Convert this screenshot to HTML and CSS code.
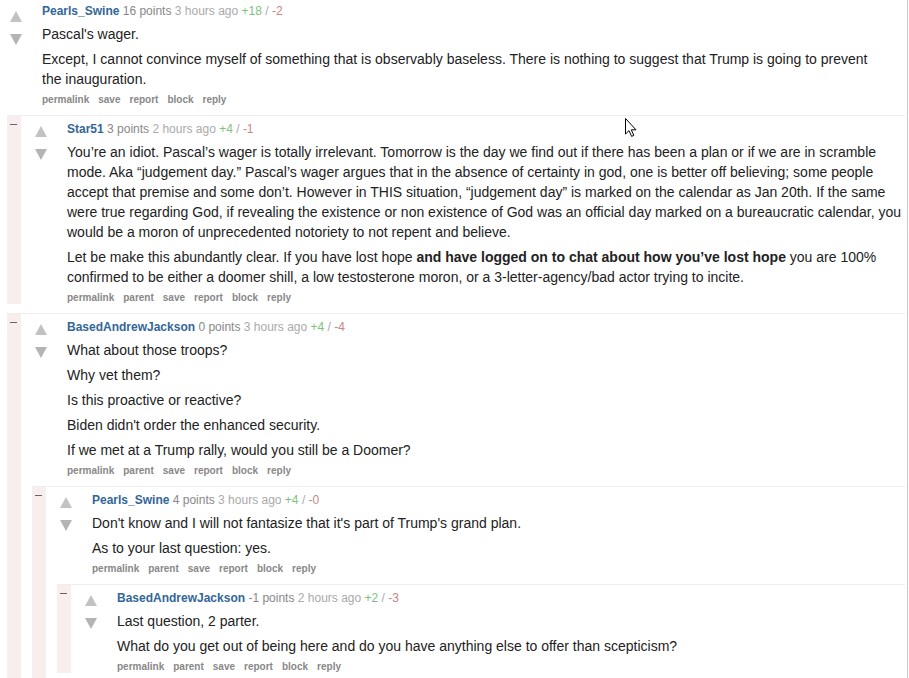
FILE: index.html
```html
<!DOCTYPE html>
<html>
<head>
<meta charset="utf-8">
<link rel="stylesheet" href="styles.css">
</head>
<body>
<div class="page">
  <div class="comment top">
    <div class="main">
      <div class="row">
        <div class="midcol">
          <svg class="arrow up" viewBox="0 0 12 11"><polygon points="6,0 12,11 0,11"/></svg>
          <svg class="arrow down" viewBox="0 0 12 11"><polygon points="0,0 12,0 6,11"/></svg>
        </div>
        <div class="entry">
          <p class="tagline"><a class="author">Pearls_Swine</a> <span class="score">16 points</span> <span class="time">3 hours ago</span> <span class="ups">+18</span> <span class="sep">/</span> <span class="downs">-2</span></p>
          <div class="md">
            <p>Pascal's wager.</p>
            <p>Except, I cannot convince myself of something that is observably baseless. There is nothing to suggest that Trump is going to prevent the inauguration.</p>
          </div>
          <ul class="buttons"><li>permalink</li><li>save</li><li>report</li><li>block</li><li>reply</li></ul>
        </div>
      </div>
      <div class="children">

        <div class="comment child">
          <div class="stripe"><span class="toggle"></span></div>
          <div class="main">
            <div class="row">
              <div class="midcol">
                <svg class="arrow up" viewBox="0 0 12 11"><polygon points="6,0 12,11 0,11"/></svg>
                <svg class="arrow down" viewBox="0 0 12 11"><polygon points="0,0 12,0 6,11"/></svg>
              </div>
              <div class="entry">
                <p class="tagline"><a class="author">Star51</a> <span class="score">3 points</span> <span class="time">2 hours ago</span> <span class="ups">+4</span> <span class="sep">/</span> <span class="downs">-1</span></p>
                <div class="md">
                  <p>You’re an idiot. Pascal’s wager is totally irrelevant. Tomorrow is the day we find out if there has been a plan or if we are in scramble mode. Aka “judgement day.” Pascal’s wager argues that in the absence of certainty in god, one is better off believing; some people accept that premise and some don’t. However in THIS situation, “judgement day” is marked on the calendar as Jan 20th. If the same were true regarding God, if revealing the existence or non existence of God was an official day marked on a bureaucratic calendar, you would be a moron of unprecedented notoriety to not repent and believe.</p>
                  <p>Let be make this abundantly clear. If you have lost hope <strong>and have logged on to chat about how you’ve lost hope</strong> you are 100% confirmed to be either a doomer shill, a low testosterone moron, or a 3-letter-agency/bad actor trying to incite.</p>
                </div>
                <ul class="buttons"><li>permalink</li><li>parent</li><li>save</li><li>report</li><li>block</li><li>reply</li></ul>
              </div>
            </div>
          </div>
        </div>

        <div class="comment child">
          <div class="stripe"><span class="toggle"></span></div>
          <div class="main">
            <div class="row">
              <div class="midcol">
                <svg class="arrow up" viewBox="0 0 12 11"><polygon points="6,0 12,11 0,11"/></svg>
                <svg class="arrow down" viewBox="0 0 12 11"><polygon points="0,0 12,0 6,11"/></svg>
              </div>
              <div class="entry">
                <p class="tagline"><a class="author">BasedAndrewJackson</a> <span class="score">0 points</span> <span class="time">3 hours ago</span> <span class="ups">+4</span> <span class="sep">/</span> <span class="downs">-4</span></p>
                <div class="md">
                  <p>What about those troops?</p>
                  <p>Why vet them?</p>
                  <p>Is this proactive or reactive?</p>
                  <p>Biden didn't order the enhanced security.</p>
                  <p>If we met at a Trump rally, would you still be a Doomer?</p>
                </div>
                <ul class="buttons"><li>permalink</li><li>parent</li><li>save</li><li>report</li><li>block</li><li>reply</li></ul>
              </div>
            </div>
            <div class="children">

              <div class="comment child">
                <div class="stripe"><span class="toggle"></span></div>
                <div class="main">
                  <div class="row">
                    <div class="midcol">
                      <svg class="arrow up" viewBox="0 0 12 11"><polygon points="6,0 12,11 0,11"/></svg>
                      <svg class="arrow down" viewBox="0 0 12 11"><polygon points="0,0 12,0 6,11"/></svg>
                    </div>
                    <div class="entry">
                      <p class="tagline"><a class="author">Pearls_Swine</a> <span class="score">4 points</span> <span class="time">3 hours ago</span> <span class="ups">+4</span> <span class="sep">/</span> <span class="downs">-0</span></p>
                      <div class="md">
                        <p>Don't know and I will not fantasize that it's part of Trump's grand plan.</p>
                        <p>As to your last question: yes.</p>
                      </div>
                      <ul class="buttons"><li>permalink</li><li>parent</li><li>save</li><li>report</li><li>block</li><li>reply</li></ul>
                    </div>
                  </div>
                  <div class="children">

                    <div class="comment child last">
                      <div class="stripe"><span class="toggle"></span></div>
                      <div class="main">
                        <div class="row">
                          <div class="midcol">
                            <svg class="arrow up" viewBox="0 0 12 11"><polygon points="6,0 12,11 0,11"/></svg>
                            <svg class="arrow down" viewBox="0 0 12 11"><polygon points="0,0 12,0 6,11"/></svg>
                          </div>
                          <div class="entry">
                            <p class="tagline"><a class="author">BasedAndrewJackson</a> <span class="score">-1 points</span> <span class="time">2 hours ago</span> <span class="ups">+2</span> <span class="sep">/</span> <span class="downs">-3</span></p>
                            <div class="md">
                              <p>Last question, 2 parter.</p>
                              <p>What do you get out of being here and do you have anything else to offer than scepticism?</p>
                            </div>
                            <ul class="buttons"><li>permalink</li><li>parent</li><li>save</li><li>report</li><li>block</li><li>reply</li></ul>
                          </div>
                        </div>
                      </div>
                    </div>

                  </div>
                </div>
              </div>

            </div>
          </div>
        </div>

      </div>
    </div>
  </div>

  <svg class="cursor" viewBox="0 0 12 19" width="12" height="19"><path d="M0.5,0.5 L0.5,16 L4,12.6 L6.6,18.4 L8.8,17.4 L6.3,11.8 L11,11.8 Z" fill="#fff" stroke="#000" stroke-width="1" stroke-linejoin="miter"/></svg>
</div>
</body>
</html>
```

FILE: styles.css
```css
html, body {
  margin: 0;
  padding: 0;
  background: #fff;
}

body {
  font-family: "Liberation Sans", Arial, sans-serif;
  color: #222;
}

.page {
  position: relative;
  width: 905px;
  height: 678px;
  padding-right: 2px;
  border-right: 1px solid #c9c9c9;
  overflow: hidden;
}

.comment {
  display: flex;
}

.comment.top {
  padding-top: 4px;
}

.comment.child {
  margin-top: 9px;
  border-top: 1px solid #eeeeee;
}

.comment.last {
  padding-bottom: 30px;
}

.stripe {
  flex: 0 0 14px;
  background: #f8eeee;
  padding-top: 8px;
  box-sizing: border-box;
}

.toggle {
  display: block;
  width: 7px;
  height: 1px;
  margin-left: 3px;
  background: #666;
}

.main {
  flex: 1;
  min-width: 0;
  display: flex;
  flex-direction: column;
}

.row {
  display: flex;
}

.midcol {
  flex: 0 0 12px;
  margin-left: 14px;
  margin-right: 20px;
  padding-top: 10px;
  display: flex;
  flex-direction: column;
}

.comment.top > .main > .row > .midcol {
  margin-left: 10px;
  padding-top: 7px;
}

.arrow {
  display: block;
  width: 12px;
  height: 11px;
}

.arrow.up {
  fill: #c2c2c2;
}

.arrow.down {
  fill: #b4b4b4;
  margin-top: 12px;
}

.entry {
  flex: 1;
  min-width: 0;
  padding-top: 6px;
}

.comment.top > .main > .row > .entry {
  padding-top: 0;
}

.tagline {
  margin: 0 0 6px;
  font-size: 12px;
  line-height: 14px;
  color: #888;
}

.author {
  color: #369;
  font-weight: bold;
  text-decoration: none;
}

.score {
  color: #888;
}

.time {
  color: #aaa;
}

.ups {
  color: #7fbf7f;
}

.sep {
  color: #aaa;
}

.downs {
  color: #c98484;
}

.md {
  max-width: 840px;
  font-size: 14px;
  line-height: 20px;
  color: #222;
}

.md p {
  margin: 0;
}

.md p + p {
  margin-top: 5px;
}

.md strong {
  font-weight: bold;
}

.buttons {
  list-style: none;
  margin: 5px 0 0;
  padding: 0;
  display: flex;
  gap: 9px;
  font-size: 10px;
  line-height: 12px;
  font-weight: bold;
  color: #888;
}

.children {
  margin-left: 11px;
}

.comment.top > .main > .children {
  margin-left: 7px;
}

.cursor {
  position: absolute;
  left: 625px;
  top: 118px;
}
```
